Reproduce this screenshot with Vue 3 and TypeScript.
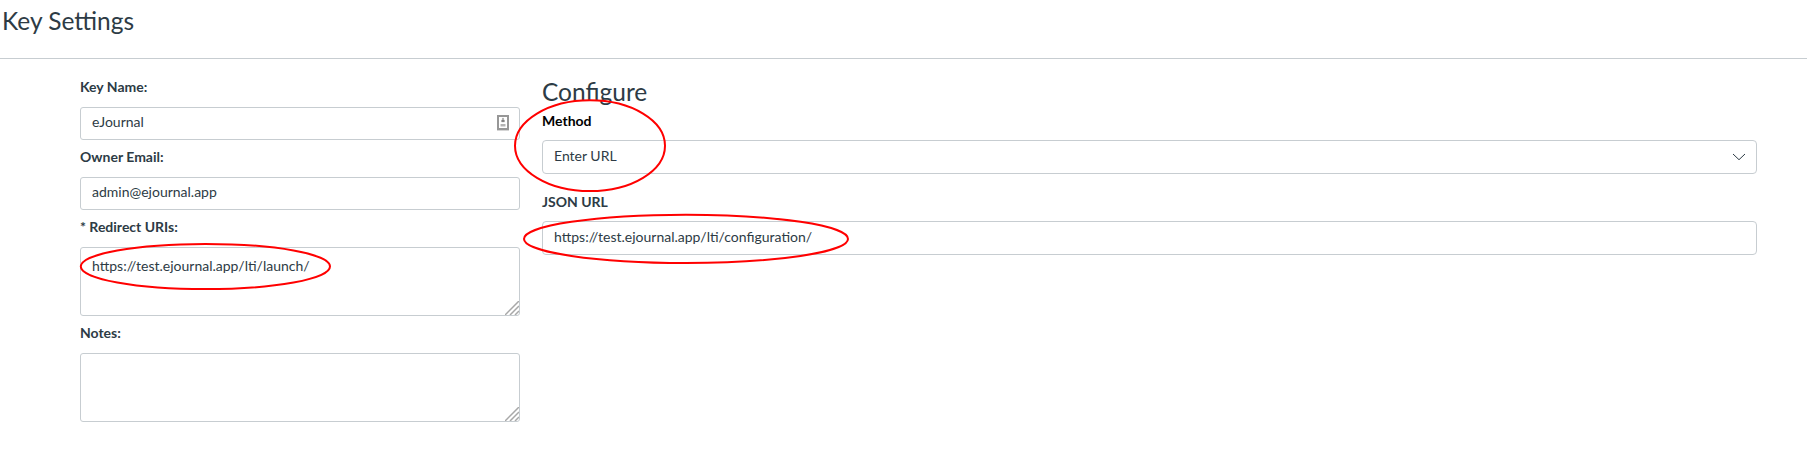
<script setup lang="ts">
import { ref } from 'vue'

const keyName = ref('eJournal')
const ownerEmail = ref('admin@ejournal.app')
const redirectUris = ref('https://test.ejournal.app/lti/launch/')
const notes = ref('')
const method = ref('Enter URL')
const jsonUrl = ref('https://test.ejournal.app/lti/configuration/')

interface Ring { cx: number; cy: number; rx: number; ry: number }

const rings: Ring[] = [
  { cx: 205.4, cy: 266.5, rx: 124.6, ry: 22.6 },
  { cx: 590, cy: 145.7, rx: 75, ry: 45.4 },
  { cx: 686, cy: 238.9, rx: 162, ry: 24.1 },
]
</script>

<template>
  <div class="page">
    <header class="header"><h2 class="title">Key Settings</h2></header>
    <main class="body">
      <section class="details">
        <label class="field">
          <span class="label">Key Name:</span>
          <span class="control">
            <input v-model="keyName" class="input" type="text" spellcheck="false" />
            <svg class="autofill" width="12" height="16" viewBox="0 0 12 16">
              <rect x="1" y="1" width="10" height="13" fill="#fff" stroke="#979797" stroke-width="2" />
              <path d="M5.500 3h1v2h1v2h-3V5h1z" fill="#7d7d7d" stroke="#a8a8a8" stroke-width="0.4" />
              <path d="M3.500 9h5v2.500h-5z" fill="#b4b4b4" />
              <path d="M0 15.500h12" stroke="#d5d5d5" />
            </svg>
          </span>
        </label>
        <label class="field">
          <span class="label">Owner Email:</span>
          <input v-model="ownerEmail" class="input" type="text" spellcheck="false" />
        </label>
        <label class="field">
          <span class="label">* Redirect URIs:</span>
          <span class="control">
            <textarea v-model="redirectUris" class="input area" spellcheck="false"></textarea>
            <svg class="grip" width="14" height="14" viewBox="0 0 14 14">
              <path d="M0 14L14 0M5 14l9-9M10 14l4-4" />
            </svg>
          </span>
        </label>
        <label class="field">
          <span class="label">Notes:</span>
          <span class="control">
            <textarea v-model="notes" class="input area" spellcheck="false"></textarea>
            <svg class="grip" width="14" height="14" viewBox="0 0 14 14">
              <path d="M0 14L14 0M5 14l9-9M10 14l4-4" />
            </svg>
          </span>
        </label>
      </section>
      <section class="configure">
        <h2 class="title subtitle">Configure</h2>
        <label class="method">
          <span class="label dark">Method</span>
          <span class="control">
            <input v-model="method" class="input tall" type="text" readonly />
            <svg class="chevron" width="14" height="8" viewBox="0 0 14 8">
              <path d="M1 1l6 5.700L13 1" fill="none" stroke="#2d3b45" stroke-width="1" />
            </svg>
          </span>
        </label>
        <label class="json">
          <span class="label">JSON URL</span>
          <input v-model="jsonUrl" class="input tall" type="text" spellcheck="false" />
        </label>
      </section>
    </main>
    <svg class="rings" width="1807" height="459" viewBox="0 0 1807 459">
      <ellipse v-for="(r, i) in rings" :key="i" :cx="r.cx" :cy="r.cy" :rx="r.rx" :ry="r.ry" />
    </svg>
  </div>
</template>

<style>
body {
  margin: 0;
  background: #fff;
}
</style>

<style scoped>
.page {
  position: relative;
  box-sizing: border-box;
  height: 459px;
  overflow: hidden;
  color: #2d3b45;
  font: 14px/20px Lato, sans-serif;
}
.header {
  box-sizing: border-box;
  height: 59px;
  padding: 3px 2px 0;
  border-bottom: 1px solid #c7cdd1;
}
.title {
  margin: 0;
  font-size: 24.5px;
  line-height: 36px;
  font-weight: 400;
}
.body {
  display: flex;
  gap: 22px;
  padding: 18px 50px 0 80px;
}
.details {
  width: 440px;
  flex: none;
}
.configure {
  flex: 1;
}
.field,
.method,
.json {
  display: block;
}
.field {
  margin-bottom: 7px;
}
.label {
  display: block;
  height: 30px;
  font-weight: 700;
}
.dark {
  color: #000;
}
.control {
  display: block;
  position: relative;
}
.input {
  display: block;
  box-sizing: border-box;
  width: 100%;
  height: 33px;
  margin: 0;
  padding: 0 11px 4px;
  border: 1px solid #c7cdd1;
  border-radius: 3px;
  outline: none;
  background: #fff;
  color: #2d3b45;
  font: inherit;
}
.area {
  height: 69px;
  padding-top: 8px;
  resize: none;
}
.tall {
  height: 34px;
  padding-bottom: 3px;
  border-radius: 4px;
}
.subtitle {
  margin-top: -3px;
}
.method .label {
  height: 29px;
  padding-top: 1px;
}
.json {
  margin-top: 18px;
}
.json .label {
  height: 29px;
}
.autofill {
  position: absolute;
  right: 11px;
  top: 8px;
}
.grip {
  position: absolute;
  right: 1px;
  bottom: 1px;
  fill: none;
  stroke: #a8a8a8;
  stroke-width: 1.5;
}
.chevron {
  position: absolute;
  right: 11px;
  top: 13px;
}
.rings {
  position: absolute;
  left: 0;
  top: 0;
  fill: none;
  stroke: #f00;
  stroke-width: 2;
  pointer-events: none;
}
</style>
